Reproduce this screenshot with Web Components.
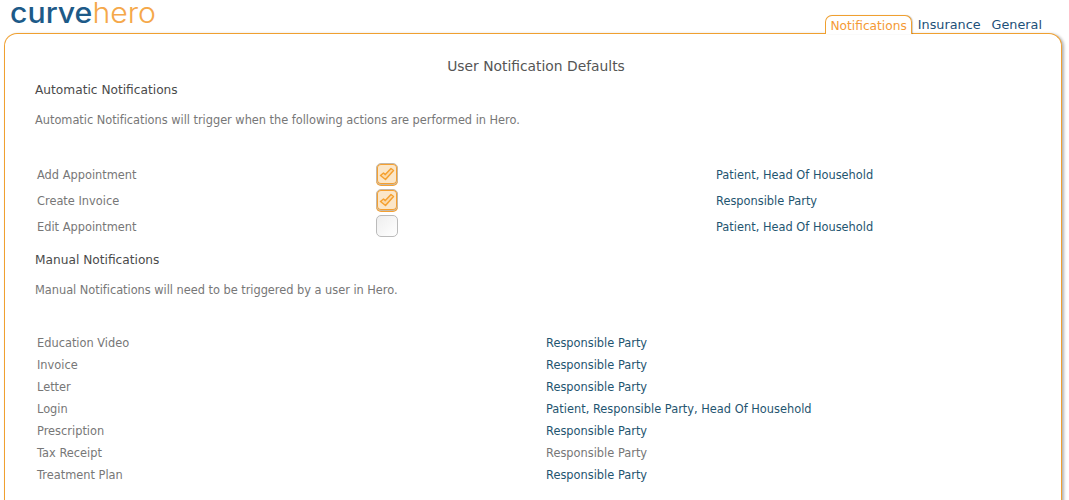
<!DOCTYPE html>
<html>
<head>
<meta charset="utf-8">
<style>
  html, body { margin: 0; height: 500px; overflow: hidden; background: #fff; }
  body { font-family: "DejaVu Sans", sans-serif; }
</style>
</head>
<body>
<settings-page>
  <top-bar slot="top"></top-bar>
  <h-title>User Notification Defaults</h-title>

  <notify-section heading="Automatic Notifications"
    note="Automatic Notifications will trigger when the following actions are performed in Hero.">
    <auto-row label="Add Appointment" checked>Patient, Head Of Household</auto-row>
    <auto-row label="Create Invoice" checked>Responsible Party</auto-row>
    <auto-row label="Edit Appointment">Patient, Head Of Household</auto-row>
  </notify-section>

  <notify-section heading="Manual Notifications" manual
    note="Manual Notifications will need to be triggered by a user in Hero.">
    <manual-row label="Education Video">Responsible Party</manual-row>
    <manual-row label="Invoice">Responsible Party</manual-row>
    <manual-row label="Letter">Responsible Party</manual-row>
    <manual-row label="Login">Patient, Responsible Party, Head Of Household</manual-row>
    <manual-row label="Prescription">Responsible Party</manual-row>
    <manual-row label="Tax Receipt" muted>Responsible Party</manual-row>
    <manual-row label="Treatment Plan">Responsible Party</manual-row>
  </notify-section>
</settings-page>

<script>
  // small helper, every element has the same shadow setup
  class Base extends HTMLElement {
    constructor() {
      super();
      this._root = this.attachShadow({ mode: "open" });
    }
  }

  class SettingsPage extends Base {
    connectedCallback() {
      this._root.innerHTML = `
      <style>
        :host { display: block; height: 500px; overflow: hidden; }
        .panel {
          margin: 0 7px 0 4px;
          height: 490px;
          box-sizing: border-box;
          border: 1px solid #f0a030;
          border-bottom: 0;
          border-radius: 13px 13px 0 0;
          box-shadow: 2px 1px 3px rgba(0,0,0,.3);
          padding: 23px 28px 0 30px;
          background: #fff;
        }
      </style>
      <slot name="top"></slot>
      <div class="panel"><slot></slot></div>`;
    }
  }

  class TopBar extends Base {
    connectedCallback() {
      this._root.innerHTML = `
      <style>
        :host {
          display: flex;
          height: 34px;
          justify-content: space-between;
          margin-bottom: -1px;
          position: relative;
          z-index: 1;
        }
        .logo {
          font: 500 28px/26px "Inter", sans-serif;
          margin: 0 0 0 10px;
          color: #1d5a88;
          transform: scaleX(1.08);
          transform-origin: left center;
          white-space: nowrap;
        }
        .logo span { color: #f5a84a; font-weight: 300; }
        nav {
          display: flex;
          align-items: flex-end;
          margin-right: 22px;
          font-size: 12.8px;
          color: #1d5078;
        }
        nav a { display: block; line-height: 20px; height: 19px; padding: 0 5px; box-sizing: border-box; }
        nav a + a { margin-left: 1px; }
        nav a.on {
          font-size: 12.2px;
          color: #f59a35;
          background: #fff;
          border: 1px solid #f0a030;
          border-bottom: 0;
          border-radius: 7px 7px 0 0;
          box-shadow: 1px 0 1px rgba(0,0,0,.2);
          padding: 0 4px;
        }
      </style>
      <div class="logo">curve<span>hero</span></div>
      <nav><a class="on">Notifications</a><a>Insurance</a><a>General</a></nav>`;
    }
  }

  class HTitle extends Base {
    connectedCallback() {
      this._root.innerHTML = `
      <style>
        :host { display: block; padding-left: 4px; text-align: center; font-size: 13.85px; line-height: 18px; color: #555; }
      </style>
      <slot></slot>`;
    }
  }

  class NotifySection extends Base {
    connectedCallback() {
      const manual = this.hasAttribute("manual");
      this._root.innerHTML = `
      <style>
        :host { display: block; }
        h3 { margin: 0; font-weight: normal; font-size: 12.2px; line-height: 16px; color: #4a4a4a; }
        p { margin: 14px 0 0; font-size: 11.4px; letter-spacing: -.03px; line-height: 16px; color: #777; }
        .rows { padding: 34px 0 0 2px; }
      </style>
      <h3>${this.getAttribute("heading")}</h3>
      <p>${this.getAttribute("note")}</p>
      <div class="rows"><slot></slot></div>`;
      this.style.marginTop = manual ? "12px" : "7px";
    }
  }

  class AutoRow extends Base {
    connectedCallback() {
      const on = this.hasAttribute("checked");
      this._root.innerHTML = `
      <style>
        :host {
          display: grid;
          grid-template-columns: 339px 340px 1fr;
          align-items: center;
          height: 26px;
          font-size: 11.4px;
        }
        .label { color: #777; }
        .who { color: #1f5570; }
        .box {
          width: 20px; height: 20px;
          margin-top: -2px;
          border: 1px solid #bbb;
          border-radius: 5px;
          background: linear-gradient(135deg, #eee, #fff);
          display: flex; align-items: center; justify-content: center;
        }
        .box.on {
          background: #fbe6c8;
          border-color: #c4b8a8;
          box-shadow: inset 0 0 0 1px #f5a030, 0 1px 0 #f5a030;
        }
      </style>
      <span class="label">${this.getAttribute("label")}</span>
      <span class="box ${on ? "on" : ""}">${on ? `<svg width="16" height="14" viewBox="0 0 16 14">
        <path d="M1.5 8.5 L4.5 6 L6.3 7.6 L12 1.5 L14.5 3.5 L6.5 12.5 Z" fill="#fbd9a8" stroke="#f5a030" stroke-width="1.5" stroke-linejoin="round"/></svg>` : ""}</span>
      <span class="who"><slot></slot></span>`;
    }
  }

  class ManualRow extends Base {
    connectedCallback() {
      const muted = this.hasAttribute("muted");
      this._root.innerHTML = `
      <style>
        :host {
          display: grid;
          grid-template-columns: 509px 1fr;
          align-items: center;
          height: 22px;
          font-size: 11.4px;
        }
        .label { color: #777; }
        .who { color: ${muted ? "#777" : "#1f5570"}; }
      </style>
      <span class="label">${this.getAttribute("label")}</span>
      <span class="who"><slot></slot></span>`;
    }
  }

  customElements.define("settings-page", SettingsPage);
  customElements.define("top-bar", TopBar);
  customElements.define("h-title", HTitle);
  customElements.define("notify-section", NotifySection);
  customElements.define("auto-row", AutoRow);
  customElements.define("manual-row", ManualRow);
</script>
</body>
</html>
